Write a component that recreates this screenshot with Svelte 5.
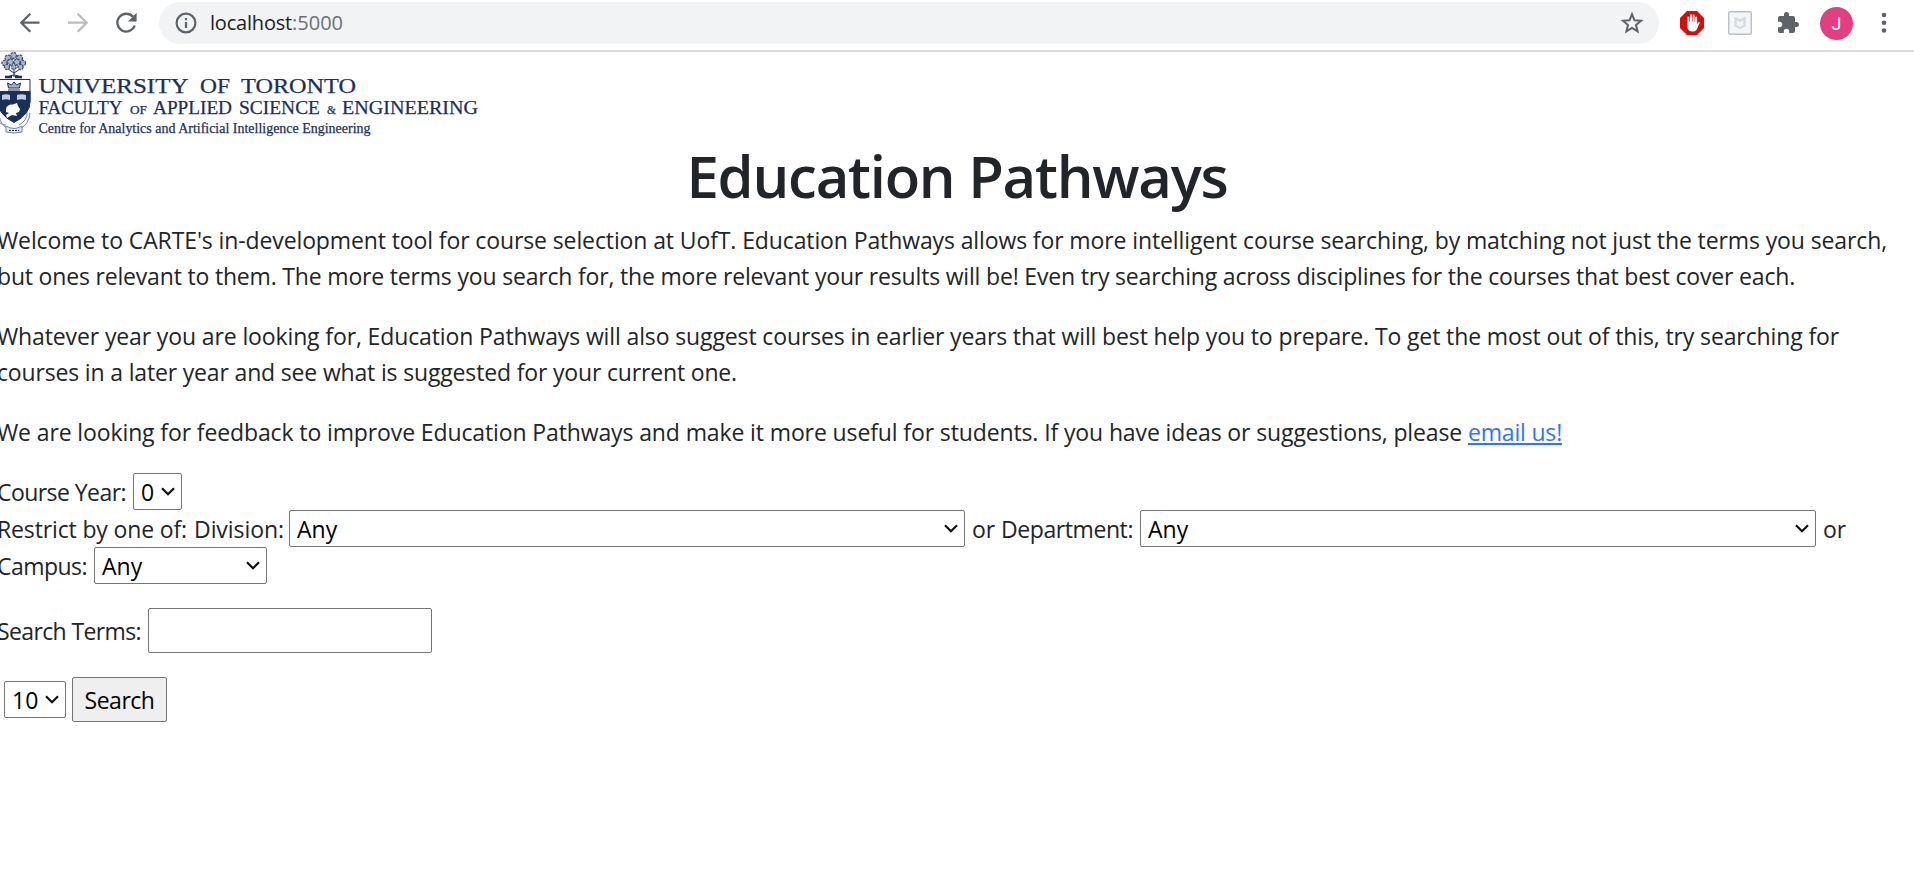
<script>
  // Spreads a run of text over a given advance width by tracking its letters.
  function fit(node, width) {
    const chars = node.textContent.length;
    const natural = node.getBoundingClientRect().width;
    node.style.letterSpacing = (width - natural) / chars + 'px';
  }

  const paragraphs = [
    [
      ["Welcome to CARTE's in-development tool for course selection at UofT. Education Pathways allows for more intelligent course searching, by matching not just the terms you search,", 1890],
      ['but ones relevant to them. The more terms you search for, the more relevant your results will be! Even try searching across disciplines for the courses that best cover each.', 1798]
    ],
    [
      ['Whatever year you are looking for, Education Pathways will also suggest courses in earlier years that will best help you to prepare. To get the most out of this, try searching for', 1842],
      ['courses in a later year and see what is suggested for your current one.', 740]
    ]
  ];

  const wordmark = [
    ['UNIVERSITY', 38.5, 93.3, 21, 150],
    ['OF', 200, 93.3, 21, 30],
    ['TORONTO', 241, 93.3, 21, 115],
    ['FACULTY', 38.5, 113.7, 18.5, 84],
    ['OF', 130, 113.7, 12.5, 17],
    ['APPLIED', 153, 113.7, 18.5, 79],
    ['SCIENCE', 239, 113.7, 18.5, 81],
    ['&', 327, 113.7, 12, 9],
    ['ENGINEERING', 342, 113.7, 18.5, 136],
    ['Centre for Analytics and Artificial Intelligence Engineering', 38.5, 132.7, 15, 332]
  ];
</script>

{#snippet picker(value, size)}
  <span class="picker {size}">
    <select aria-label={size}><option>{value}</option></select>
    <svg class="chevron" width="14" height="9" viewBox="0 0 14 9"><path d="M1 1.2 7 7.2 13 1.2" fill="none" stroke="#111" stroke-width="2.2" /></svg>
  </span>
{/snippet}

<div class="browser">
  <header class="toolbar">
    <svg class="nav" width="24" height="24" viewBox="0 0 24 24"><path d="M21.500 11.700H3.600M12.300 2.700l-9 9 9 9" /></svg>
    <svg class="nav faded" width="24" height="24" viewBox="0 0 24 24"><path d="M2 11.700h18M11.700 2.700l9 9-9 9" /></svg>
    <svg class="nav" width="24" height="24" viewBox="0 0 24 24"><path d="M20.700 14.500a8.900 8.900 0 1 1-1.700-8.700" /><path d="M22.600 1.800v8.600H14z" class="solid" /></svg>
    <div class="address">
      <svg class="info" width="22" height="22" viewBox="0 0 22 22"><circle cx="11" cy="11" r="9.400" /><path d="M11 10v6M11 6v2.300" /></svg>
      <span class="url"><span use:fit={82}>localhost</span><span class="port" use:fit={51}>:5000</span></span>
      <svg class="star" width="24" height="24" viewBox="0 0 24 24"><path d="m12 3.200 2.500 6.100 6.500.5-5 4.200 1.600 6.400-5.600-3.400-5.600 3.400L8 14 3 9.800l6.500-.5z" /></svg>
    </div>
    <svg class="blocker" width="24" height="24" viewBox="0 0 24 24">
      <path d="M7 0h10l7 7v10l-7 7H7l-7-7V7z" fill="#d90b0b" />
      <path d="M8.300 13V6.500M11 12V4.200M13.600 12V4.500M16.100 13V6.500" stroke="#fff" stroke-width="2" stroke-linecap="round" />
      <path d="M7.300 10.500h9.800v2.800l1.300-2q1.200-.8 1.400.3l-2.700 6.200Q16 20.600 12.600 20.600c-3.500 0-5.300-2-5.300-5z" fill="#fff" />
    </svg>
    <svg class="shield" width="24" height="24" viewBox="0 0 24 24"><rect x=".7" y=".7" width="22.600" height="22.600" rx="1.500" fill="#f4f5f6" stroke="#b9c0c5" stroke-width="1.400" /><path d="M7.500 7.500 12 9.700l4.500-2.200v7L12 17l-4.500-2.500z" fill="none" stroke="#d6dadd" stroke-width="2.400" /></svg>
    <svg class="puzzle" width="22" height="22" viewBox="1 1 22 22"><path d="M20.500 11H19V7a2 2 0 0 0-2-2h-4V3.500a2.500 2.500 0 0 0-5 0V5H4a2 2 0 0 0-2 2v3.800h1.500a2.700 2.700 0 0 1 0 5.400H2V20a2 2 0 0 0 2 2h3.800v-1.500a2.700 2.700 0 0 1 5.400 0V22H17a2 2 0 0 0 2-2v-4h1.500a2.500 2.500 0 0 0 0-5z" fill="#5f6368" /></svg>
    <span class="avatar">J</span>
    <svg class="dots" width="6" height="22" viewBox="0 0 6 22"><circle cx="3" cy="3" r="2.300" /><circle cx="3" cy="10.800" r="2.300" /><circle cx="3" cy="18.500" r="2.300" /></svg>
  </header>

  <main>
    <svg class="brand" width="480" height="88" viewBox="0 52 480 88">
      <g class="crest">
        <path d="M14 66v11M14 73l-6-4M14 73l6-4M8 77q6-4 12 0" />
        <g class="leaves">
          <circle cx="13.500" cy="55.500" r="3" /><circle cx="8" cy="58" r="3" /><circle cx="19.500" cy="58" r="3" /><circle cx="4.500" cy="63" r="2.600" /><circle cx="23" cy="63" r="2.600" /><circle cx="10.500" cy="62" r="3" /><circle cx="17" cy="62" r="3" /><circle cx="7" cy="67" r="2.600" /><circle cx="20.500" cy="67" r="2.600" /><circle cx="13.800" cy="67" r="2.400" />
        </g>
        <path d="M5 77h18" stroke-width="2.400" stroke-dasharray="7 3" />
        <path d="M-2 79.500h32v22q0 13-16 21-16-8-16-21z" fill="#fff" />
        <path d="M-2 91.500h32v10q0 12.500-16 20.500-16-8-16-20.500z" fill="#1b2f5b" />
        <path d="M8 90h12M8.500 88l-1-5 4 2 2.500-3 2.500 3 4-2-1 5z" fill="#a7b2c6" />
        <path d="M2 95q4-1.500 8 0v5q-4-1.500-8 0zM17 95q4-1.500 9 0v5q-5-1.500-9 0z" fill="#c5ccd9" stroke="none" />
        <path d="M6 109q1-5 7-4.500l4-1.500 1 3 2 3-1 3-3 1 1 3-5-1-5 3-1-3 3-2-3-1z" fill="#fff" stroke="none" />
        <path d="M30 113q-1 11-9 15M-1 116q2 9 8 12M27 112q1 8-8 13M-1 122q4 4 7 3" stroke="#7281a0" />
        <path d="M6 126q8 5 16 0v6q-8 2-16 0z" fill="#e3e7ee" stroke="#7281a0" /><path d="M9 130.500h10" stroke-dasharray="2 1" />
      </g>
      {#each wordmark as [text, x, y, size, width]}
        <text {x} {y} font-size={size} textLength={width} lengthAdjust="spacingAndGlyphs">{text}</text>
      {/each}
    </svg>

    <h1><span use:fit={541}>Education Pathways</span></h1>

    {#each paragraphs as lines}
      <p>{#each lines as [line, width]}<span class="line"><span use:fit={width}>{line}</span></span>{/each}</p>
    {/each}
    <p class="line last"><span use:fit={1471}>We are looking for feedback to improve Education Pathways and make it more useful for students. If you have ideas or suggestions, please&nbsp;</span><a href="#email" use:fit={94}>email us!</a></p>

    <form>
      <div class="row year"><label use:fit={129}>Course Year:</label>{@render picker('0', 'short')}</div>
      <div class="row">
        <span class="low restrict" use:fit={190}>Restrict by one of:</span><label class="division" use:fit={90}>Division:</label>{@render picker('Any', 'wide')}
        <span class="low or" use:fit={23}>or</span><label class="department" use:fit={132}>Department:</label>{@render picker('Any', 'wide')}
        <span class="low or" use:fit={23}>or</span>
      </div>
      <div class="row campus"><label use:fit={90}>Campus:</label>{@render picker('Any', 'medium')}</div>
      <div class="row terms"><label use:fit={144}>Search Terms:</label><input type="text" aria-label="Search Terms" /></div>
      <div class="row submit">{@render picker('10', 'count')}<button type="button"><span use:fit={70}>Search</span></button></div>
    </form>
  </main>
</div>

<style>
  :global(body) { margin: 0; background: #fff; overflow: hidden; }
  .browser { width: 1914px; height: 873px; overflow: hidden; background: #fff; color: #212529; font-family: 'Open Sans', 'Noto Sans', sans-serif; font-size: 23px; }
  .browser * { box-sizing: border-box; }
  svg { display: block; flex: none; overflow: visible; }
  span, label, a { white-space: nowrap; }

  .toolbar { display: flex; align-items: center; height: 52px; padding: 0 0 4px 18px; border-bottom: 2px solid #dadada; }
  .nav { fill: none; stroke: #5f6368; stroke-width: 2.3; margin-right: 24px; }
  .nav.faded { stroke: #babcbe; }
  .nav .solid { fill: #5f6368; stroke: none; }
  .address { display: flex; align-items: center; width: 1500px; height: 42px; margin-left: -3px; padding: 0 15px 0 16px; border-radius: 21px; background: #f1f3f4; }
  .info { fill: none; stroke: #5f6368; stroke-width: 2.2; }
  .url { flex: 1; margin-left: 13px; font-size: 20px; line-height: 40px; color: #202124; }
  .port { color: #6c7075; }
  .star { fill: none; stroke: #5f6368; stroke-width: 2; }
  .blocker { margin-left: 21px; }
  .shield { margin-left: 24px; }
  .puzzle { margin-left: 25px; }
  .avatar { width: 33px; height: 33px; margin-left: 21px; border-radius: 50%; background: #e33e7f; color: #fff; font: 18px/33px Roboto, sans-serif; text-align: center; }
  .dots { margin-left: 28px; fill: #5f6368; }

  .brand text { fill: #1b2f5b; stroke: #1b2f5b; stroke-width: .25px; font-family: 'Liberation Serif', serif; }
  .crest { fill: none; stroke: #1b2f5b; stroke-width: 1; }
  .leaves { fill: #a9b5c9; stroke: #3c5078; stroke-width: 1.3; stroke-dasharray: 2.5 1; }

  h1 { display: flex; justify-content: center; height: 72px; margin: 0 0 10px; font-size: 58px; font-weight: 600; line-height: 72px; }
  p { margin: 0 0 24px -3px; line-height: 36px; }
  .line { display: flex; height: 36px; }
  .last { margin-bottom: 23px; }
  a { color: #2f74ff; text-decoration: underline; text-decoration-thickness: 2px; text-underline-offset: 2px; }

  form { margin-left: -3px; }
  .row { display: flex; align-items: center; height: 37px; line-height: 37px; }
  .row label { padding-top: 1px; }
  .low { padding-top: 2px; }
  .picker { position: relative; flex: none; height: 37px; }
  select, input, button { margin: 0; border: 1px solid #767676; border-radius: 2px; background: #fff; color: #000; font: inherit; }
  select { display: block; width: 100%; height: 37px; padding: 1px 0 0 7px; appearance: none; line-height: 35px; }
  .chevron { position: absolute; top: 14px; right: 7px; }
  .short { width: 49px; margin-left: 7px; }
  .division { margin-left: 7px; }
  .wide { width: 676px; margin-left: 5px; }
  .or { margin-left: 7px; }
  .department { margin-left: 6px; }
  .department + .wide { margin-left: 7px; }
  .medium { width: 173px; margin-left: 7px; }
  .terms { height: 45px; margin-top: 24px; }
  input { width: 284px; height: 45px; margin-left: 7px; }
  .submit { height: 45px; margin-top: 24px; padding-left: 7px; }
  .count { width: 62px; }
  button { width: 95px; height: 45px; margin-left: 6px; padding: 1px 0 0; background: #efefef; }
</style>
